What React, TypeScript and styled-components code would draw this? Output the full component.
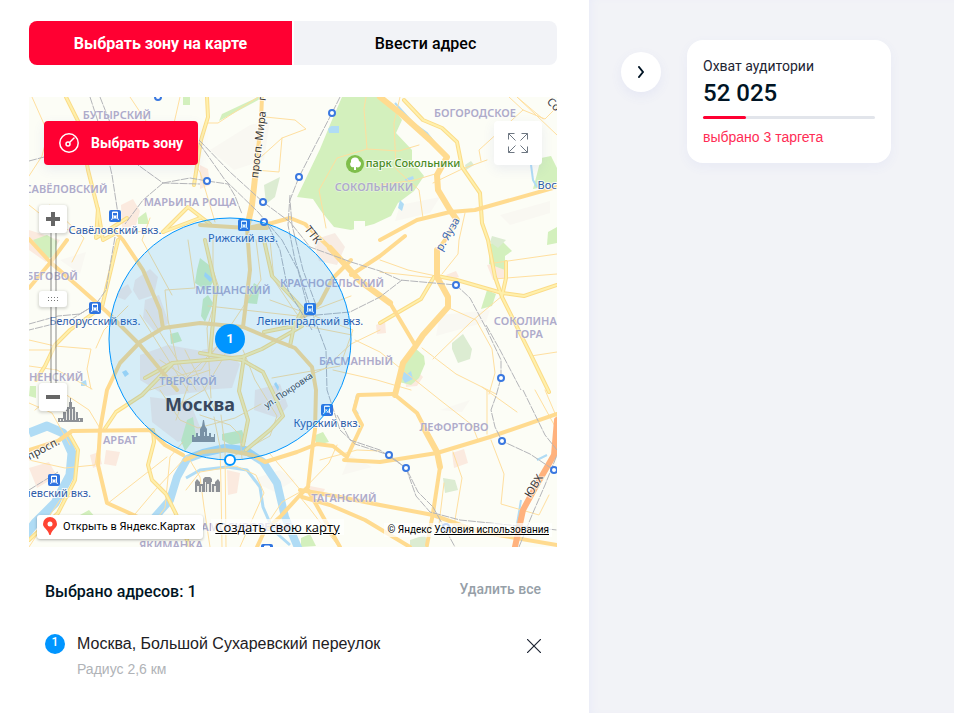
import React, { useState } from 'react';
import styled, { createGlobalStyle } from 'styled-components';

const GlobalStyle = createGlobalStyle`
  *, *::before, *::after { box-sizing: border-box; }
  body {
    margin: 0;
    background: #fff;
    color: #001424;
    font-family: Roboto, "Liberation Sans", sans-serif;
  }
  button, input { font: inherit; color: inherit; }
  button { border: 0; padding: 0; background: none; cursor: pointer; }
  h2, p, ul { margin: 0; padding: 0; }
  ul { list-style: none; }
`;

const Page = styled.div`
  display: flex;
  min-height: 100vh;
`;

const Main = styled.main`
  flex: 1;
  min-width: 0;
  padding: 21px 32px 32px 29px;
`;

const Sidebar = styled.aside`
  flex: 0 0 365px;
  display: flex;
  align-items: flex-start;
  gap: 26px;
  padding: 40px 32px;
  background: #f2f3f7;
  box-shadow: inset 6px 0 8px -4px #e9ebf8;
`;

const Tabs = styled.div`
  display: grid;
  grid-template-columns: 1fr 1fr;
  gap: 2px;
  margin-bottom: 32px;
  border-radius: 8px;
  overflow: hidden;
`;

const Tab = styled.button<{ $active?: boolean }>`
  height: 44px;
  padding-top: 2px;
  background: ${(p) => (p.$active ? '#ff0032' : '#f2f3f7')};
  color: ${(p) => (p.$active ? '#fff' : '#000')};
  font-size: 16px;
  font-weight: ${(p) => (p.$active ? 700 : 500)};
  line-height: 24px;
`;

const MapFrame = styled.section`
  position: relative;
  height: 450px;
  overflow: hidden;
  background: #fcfdf6;
`;

const MapCanvas = styled.svg`
  display: block;
  width: 100%;
  height: 100%;
`;

const PickZone = styled.button`
  position: absolute;
  top: 24px;
  left: 15px;
  display: flex;
  align-items: center;
  gap: 12px;
  height: 44px;
  padding: 0 15px;
  border-radius: 4px;
  background: #ff0032;
  box-shadow: 0 4px 12px rgba(90, 100, 200, 0.1);
  color: #fff;
  font-size: 14px;
  font-weight: 700;
`;

const Expand = styled.button`
  position: absolute;
  top: 24px;
  right: 15px;
  display: grid;
  place-items: center;
  width: 48px;
  height: 44px;
  border-radius: 4px;
  background: #fff;
  box-shadow: 0 4px 12px rgba(90, 100, 200, 0.1);
`;

const ZoomGroup = styled.div`
  position: absolute;
  top: 108px;
  left: 10px;
  display: flex;
  flex-direction: column;
  width: 28px;
`;

const ZoomButton = styled.button`
  display: grid;
  place-items: center;
  height: 28px;
  border-radius: 3px;
  background: #fff;
  box-shadow: 0 1px 3px 1px rgba(0, 0, 0, 0.15);
`;

const ZoomRange = styled.input`
  appearance: none;
  writing-mode: vertical-lr;
  direction: rtl;
  width: 28px;
  height: 150px;
  margin: 0;
  background: linear-gradient(90deg, transparent 11px, rgba(110, 110, 110, 0.4) 11px 13px, rgba(255, 255, 255, 0.4) 13px 16px, rgba(110, 110, 110, 0.4) 16px 18px, transparent 18px);
  cursor: pointer;

  &::-webkit-slider-thumb {
    appearance: none;
    width: 28px;
    height: 16px;
    border-radius: 3px;
    background:
      repeating-linear-gradient(90deg, #777 0 1px, transparent 1px 3px) 9px 6px / 10px 1px no-repeat,
      repeating-linear-gradient(90deg, #777 0 1px, transparent 1px 3px) 9px 9px / 10px 1px no-repeat,
      #fff;
    box-shadow: 0 1px 3px 1px rgba(0, 0, 0, 0.15);
  }
`;

const MapFooter = styled.div`
  position: absolute;
  right: 5px;
  bottom: 8px;
  left: 8px;
  display: flex;
  align-items: center;
  gap: 8px;
`;

const OpenMaps = styled.a`
  display: flex;
  align-items: center;
  gap: 6px;
  height: 24px;
  padding: 0 8px 2px 6px;
  border-radius: 3px;
  background: #fff;
  box-shadow: 0 1px 3px rgba(0, 0, 0, 0.3);
  color: #000;
  font-size: 11px;
  text-decoration: none;
  white-space: nowrap;
`;

const CreateMap = styled.a`
  padding: 0 4px;
  background: rgba(255, 255, 255, 0.7);
  color: #000;
  font-family: "Open Sans", sans-serif;
  font-size: 13px;
  line-height: 16px;
  white-space: nowrap;
`;

const Copyright = styled.p`
  margin: 6px 0 0 auto;
  padding: 0 3px;
  background: rgba(255, 255, 255, 0.7);
  color: #000;
  font-size: 10px;
  line-height: 14px;
  white-space: nowrap;

  a { color: inherit; }
`;

const Addresses = styled.section`
  padding: 32px 16px 0;
`;

const AddressHeader = styled.header`
  display: flex;
  justify-content: space-between;
  align-items: flex-start;
  margin-bottom: 28px;
`;

const AddressTitle = styled.h2`
  padding-top: 1px;
  font-size: 16px;
  font-weight: 500;
  line-height: 24px;
`;

const ClearAll = styled.button`
  color: #969fa8;
  font-size: 14px;
  font-weight: 500;
  line-height: 20px;
`;

const AddressRow = styled.li`
  display: flex;
  align-items: flex-start;
  gap: 12px;
`;

const AddressIndex = styled.span`
  width: 20px;
  height: 20px;
  margin-top: 2px;
  border-radius: 50%;
  background: #0095ff;
  color: #fff;
  font-size: 12px;
  font-weight: 500;
  line-height: 16px;
  text-align: center;
`;

const AddressText = styled.div`
  flex: 1;
`;

const AddressName = styled.p`
  color: #1d2023;
  font-family: "Liberation Sans", sans-serif;
  font-size: 16px;
  line-height: 24px;
`;

const AddressRadius = styled.p`
  margin-top: 3px;
  color: #b0b3b7;
  font-family: "Liberation Sans", sans-serif;
  font-size: 14px;
  line-height: 20px;
`;

const Remove = styled.button`
  display: grid;
  place-items: center;
  width: 14px;
  height: 28px;
`;

const Collapse = styled.button`
  display: grid;
  place-items: center;
  width: 40px;
  height: 40px;
  margin-top: 12px;
  border-radius: 50%;
  background: #fff;
  box-shadow: 0 4px 12px rgba(90, 100, 220, 0.08);
`;

const ReachCard = styled.section`
  width: 204px;
  padding: 16px;
  border-radius: 16px;
  background: #fff;
  box-shadow: 0 4px 12px rgba(90, 100, 220, 0.06);
`;

const ReachTitle = styled.h2`
  color: #1d2433;
  font-size: 14px;
  font-weight: 400;
  line-height: 20px;
`;

const ReachValue = styled.p`
  padding-top: 1px;
  color: #001424;
  font-size: 24px;
  font-weight: 500;
  line-height: 32px;
`;

const ReachTrack = styled.div`
  height: 3px;
  margin: 7px 0 8px;
  border-radius: 2px;
  background: #e2e5eb;
`;

const ReachFill = styled.div`
  height: 3px;
  border-radius: 2px;
  background: #ff0032;
`;

const ReachNote = styled.p`
  color: #ff2d55;
  font-family: "Liberation Sans", sans-serif;
  font-size: 14px;
  line-height: 20px;
`;

const Road = styled.path<{ $w: number; $tone?: string }>`
  fill: none;
  stroke: ${(p) => p.$tone ?? '#ffdc8c'};
  stroke-width: ${(p) => p.$w}px;
  stroke-linejoin: round;
  stroke-linecap: round;
`;

const Rail = styled.path`
  fill: none;
  stroke: #b4b5b9;
  stroke-width: 1px;
  stroke-dasharray: 8 1;
`;

const District = styled.text`
  fill: #aeabca;
  font-family: "Noto Sans", sans-serif;
  font-size: 11px;
  font-weight: 600;
  text-anchor: middle;
  paint-order: stroke;
  stroke: rgba(255, 255, 255, 0.5);
  stroke-width: 1px;
`;

const Station = styled.text`
  fill: #2f5ca8;
  font-family: "Noto Sans", sans-serif;
  font-size: 11px;
  text-anchor: middle;
  paint-order: stroke;
  stroke: rgba(255, 255, 255, 0.8);
  stroke-width: 2px;
`;

const Street = styled.text<{ $color?: string; $size?: number }>`
  fill: ${(p) => p.$color ?? '#3c3c3c'};
  font-family: "Noto Sans", sans-serif;
  font-size: ${(p) => p.$size ?? 11}px;
  text-anchor: middle;
  paint-order: stroke;
  stroke: rgba(255, 255, 255, 0.7);
  stroke-width: 2px;
`;

const City = styled.text`
  fill: #38475d;
  font-family: "Noto Sans", sans-serif;
  font-size: 18px;
  font-weight: 700;
  text-anchor: middle;
`;

const MarkerText = styled.text`
  fill: #fff;
  font-size: 13px;
  font-weight: 700;
  text-anchor: middle;
`;

const builtUp = [
  'M29 230L60 240L46 262L29 250Z', 'M121 205l12-6 7 12-4 14-14 4Z', 'M405 375l10-6 8 8-6 9-11 1Z', 'M452 453l12-4 4 14-14 5Z',
  'M487 265l16-3 3 16-13 2Z', 'M446 275l10-4 3 6-8 3Z', 'M29 468l20-6 8 14-20 12Z', 'M90 455l9-3 3 12-9 4Z',
  'M227 470l13 3-3 20-9 2Z', 'M310 486l15 3-5 10-11-3Z', 'M376 325l9-4 1 12-9 1Z', 'M200 165l8 4 2 16-10 4Z', 'M106 450l14 2-4 14-12-2Z',
];

const centre = [
  'M135 280l15-11 8 8-4 18-15 5-6-10Z', 'M145 300l14-5 10 28-14 9-12-14Z', 'M140 355l28-10 34 6 16 20-12 20-40 5-26-16Z', 'M202 350l20-4 18 18-8 24-30 2Z',
  'M119 290l9-6 4 8-7 8-8-3Z', 'M313 240l22-7 10 14-8 18-18-4Z', 'M255 390l25-6 8 22-10 12-24-8Z', 'M150 397l40 5 12 30-24 10-26-20Z',
];

const greens = [
  'M342 97L378 97L393 108L402 120L396 133L412 150L412 161L424 176L414 191L398 203L391 216L374 224L351 230L334 227L321 211L313 199L297 197L308 174L320 149L332 120Z',
  'M219 121l3-7 36-17h6Z', 'M541 158l10-2 6 12v16l-24 5 4-15Z', 'M490 244l10-5 12 12-7 5v14l-16-6Z',
  'M403 362l12-14 9 8 1 8-6 14-8 7-12-3Z', 'M487 290l9 4-4 12-11 3Z',
  'M200 258l9 7 6 14-8 12-12-8 2-13Z', 'M254 283l6 4-3 17-11-1Z', 'M203 299l5-4 5 8-8 19-4-6Z', 'M170 334l8-2 4 9-11 3Z',
  'M187 420l6-3 3 20-11 14-4-10Z', 'M222 434l20-4 4 12-15 3-9-5Z', 'M313 436l10-4 6 10-12 3Z',
  'M33 240l14-5 10 6-2 15-9 3Z', 'M80 515l9-5 7 8-11 2Z',
  'M301 538l9-4 6 12-15 1Z', 'M138 218l8-6 3 12h-11Z', 'M30 386l6 0 0 12-7-2Z', 'M548 232l9-5v16l-10 2Z', 'M183 97h7v8h-7Z',
];

const thinRoads = [
  'M32 97L48 133L42 156L29 176', 'M208 123h10L258 97', 'M265 117l30 3 11 9-24 9-21 19M282 138l-3 34-24-2', 'M366 97l-2 12 3 40-30 9-18 32 7 38',
  'M367 149l32 2 20-6', 'M400 97l-6 26 2 46 23 21 4 28', 'M509 97l14 13 22 9 12-12M517 97l26 22M523 110L479 150l2 11', 'M433 183l29-14 25-9',
  'M465 213l-6 27-1 14-16 20', 'M380 185l35-5 20-6', 'M380 260l28 10 28 6M380 272l54 6', 'M494 263l63-9M494 279l63-5',
  'M449 308l27 12 16 29 3 24-6 21', 'M502 296l-30 25-39 38M422 348l34 26 40 20',
  'M531 356l26-4', 'M29 340l26 6 36 3-4 20 4 20M29 350l25 0', 'M96 348l8-18 24-24', 'M188 240l5 34 2 14-30 2 3 30 11 50', 'M213 240v30l6 18-12 40 4 70',
  'M256 240l5 40-40 60-20 30-40 10',
  'M270 240l4 40 20 30 12 16 46 9M270 300l83 30-13 36-68 12', 'M208 306l90 10 53-20', 'M380 330L351 344l-27 25-12 5', 'M355 340l25 12 60 48 32 25 6 15',
  'M487 390v44M482 387l35 25', 'M333 370l44 10 34 10', 'M453 452l9 26-9 54-14-8 5-41', 'M491 440l13 34-3 30 38 11 10-20', 'M29 460l36 8 30-3 4-25',
  'M107 504l60-47M119 533l38-45 30-32M152 525l13-17 5-51 13-15',
  'M232 340l-10 20-18 30-24 14M243 350l12 30 22 36-7 20-40 22', 'M200 415l30 10 10 10 2 24M160 390l20 30 18 8 37-10 26-14', 'M140 315l48 76M146 310l50 80M181 383l40-40',
  'M270 454l17 20 15 18', 'M210 547l-6-40-4-30-12-20M222 547l-1-60-1-40-6-30M226 547l-1-100-4-32', 'M240 547l24-54-8-18-20-9-36 6-14 18', 'M300 497l10 12 29 38',
  'M300 492l-18 10-20 30', 'M320 460l37-10 23 1', 'M337 445l-8 18-26 27', 'M29 403l23 10 18 32', 'M35 410l24-20 30 20 12 20', 'M29 547l31-47 14-5',
  'M180 97l-8 35 28 40 15 50', 'M130 97l30 45 8 16', 'M50 205l34 33-12 24', 'M29 205l30 24 60 4 30-2', 'M517 97l40 38', 'M545 390l12 28M535 390l22 40', 'M29 366l28 4 35 19',
  'M150 218l-8 22 30 55', 'M160 360l30 20-14 40M185 350l30 60M150 390l60-20',
];

const midRoads = [
  'M66 97L80 125L88 170L98 210L103 240L114 234', 'M207 97L208 117L201 140L194 185', 'M404 100L423 120L442 128L457 142L462 167L480 193L482 223L488 240L495 277L502 297L530 353L549 392',
  'M118 240L106 290L102 307L70 330L55 345L45 366L36 380', 'M264 240L272 276L303 309L294 326L264 332M294 326L290 346', 'M302 326L262 349L242 357L172 363L145 378',
  'M200 353L242 360L263 372L275 397L283 416L270 430L246 450', 'M380 323L421 299L434 277', 'M437 276L457 280L502 293L524 296L557 285', 'M506 262L506 278L502 296',
  'M173 363L142 395L116 412L104 430', 'M244 357L239 391L248 420L243 445', 'M205 240L216 288L210 355', 'M153 430L154 442L148 465L152 480L166 494L176 514L190 547',
  'M29 540L58 513L75 480L78 450L69 434', 'M163 232L188 207L210 224', 'M98 209L96 238L127 218', 'M163 232L200 218',
];

const wideRoads = [
  'M29 239L50 262L80 288L107 312L140 345L177 390', 'M67 240L50 263L29 288', 'M114 230L123 240L143 270L160 310L163 328',
  'M151 530L138 517L107 503L98 465L100 430L107 390L120 363L140 342L163 328L200 323L243 327L267 337L295 348L312 367L316 390L315 430L313 443L308 487L300 495L280 517L265 530L257 547',
  'M262 97L261 120L257 160L252 205L247 228L250 270L243 327', 'M247 228L272 223L290 218L305 224L330 248L360 281L390 303L415 345', 'M200 225L247 228L267 228', 'M29 450L58 441L72 431L150 430L165 445L183 455',
  'M185 460L203 452L225 450L252 455L265 462L297 452L317 444L333 446L347 457L362 425L354 410L358 395L393 394',
  'M380 97L400 113L430 140L447 157L437 175L438 190L450 210L457 220L445 240L438 250L437 277L448 297L448 307L423 335L415 347L403 363L395 395L417 413L437 452L440 467L433 513L427 545',
  'M380 240L417 220L450 212L475 210L557 187', 'M351 260L333 278L320 303L300 320', 'M344 460L380 462L437 453L490 437L557 414', 'M300 490L340 497L380 505L433 515L480 532L557 545',
  'M351 275L380 256L405 236', 'M308 490L340 547', 'M302 497L330 505L365 520L410 547',
];

const rails = [
  'M90 97L104 140L112 175L118 214', 'M29 161L48 156L100 130', 'M100 97L115 135L138 165L163 183L200 184', 'M163 183L143 200L125 224', 'M163 183L190 178L207 181L228 184L235 196L242 214',
  'M199 140L230 172L263 202L290 222L310 247L351 262L380 271L400 280L456 285L470 298L486 328L501 360L501 378L496 396L491 410L495 427L502 441L530 454L554 470',
  'M199 143L225 180L258 212L282 240L298 270L308 309', 'M340 97L332 113L318 140L299 177L290 200L292 225L303 270L316 305',
  'M290 195L288 225L295 260L313 315L326 350L327 390L340 430L355 444L389 455L406 468L418 492L433 507L455 547',
  'M268 225L280 250L288 290L312 330', 'M306 316L350 312L380 297L402 280', 'M486 325L500 350L521 390', 'M115 237L111 260L106 290L96 304L80 314L58 316L29 324', 'M100 302L70 320L29 330',
  'M29 490L58 472', 'M406 468L416 496L430 512L460 520L500 524L557 530', 'M523 390L545 435L557 450', 'M519 547L532 515L545 485L557 455', 'M337 415L350 440L380 450L406 468',
];

const districts: [string, number, number][] = [
  ['БУТЫРСКИЙ', 117, 119], ['БОГОРОДСКОЕ', 475, 117], ['САВЁЛОВСКИЙ', 66, 193], ['МАРЬИНА РОЩА', 190, 206], ['СОКОЛЬНИКИ', 374, 191],
  ['БЕГОВОЙ', 52, 280], ['МЕЩАНСКИЙ', 233, 294], ['КРАСНОСЕЛЬСКИЙ', 332, 287], ['СОКОЛИНАЯ', 529, 325], ['ГОРА', 529, 338], ['БАСМАННЫЙ', 356, 365],
  ['ТВЕРСКОЙ', 188, 385], ['ПРЕСНЕНСКИЙ', 42, 381], ['АРБАТ', 120, 444], ['ЛЕФОРТОВО', 454, 431], ['ТАГАНСКИЙ', 344, 502], ['ЯКИМАНКА', 171, 549], ['ЗАМОСКВОРЕЧЬЕ', 243, 531],
];

const stations: [string, number, number, number, number][] = [
  ['Савёловский вкз.', 115, 234, 115, 216], ['Рижский вкз.', 243, 242, 244, 225], ['Белорусский вкз.', 95, 325, 95, 308],
  ['Ленинградский вкз.', 310, 325, 310, 309], ['Курский вкз.', 327, 427, 327, 410], ['Киевский вкз.', 54, 497, 54, 480], ['Павелецкий вкз.', 267, 566, 267, 550],
];

const stops = [[158, 97], [207, 181], [332, 113], [299, 177], [263, 202], [264, 222], [456, 285], [501, 378], [502, 441], [389, 455], [406, 468], [554, 470], [446, 527]];

function TrainIcon({ x, y }: { x: number; y: number }) {
  return (
    <g transform={`translate(${x - 6} ${y - 6})`}>
      <rect width="12" height="12" rx="2" fill="#2f74e0" />
      <path d="M3.500 2h5v6h-5zM3.500 8l-1 2M8.500 8l1 2" fill="#fff" stroke="#fff" strokeWidth="1" />
      <path d="M4 3h4v2.500H4zM4 6.500h1v1H4zM7 6.500h1v1H7z" fill="#2f74e0" />
    </g>
  );
}

function CityMap() {
  return (
    <MapCanvas viewBox="29 97 528 450" preserveAspectRatio="xMidYMid slice" role="img" aria-label="Карта Москвы">
      <rect x="-600" y="-200" width="1800" height="1000" fill="#fcfdf6" />
      <path
        d="M210 150l40-25 20-5-6 40-30 10ZM440 315l50-5-4 12-50 14ZM400 205l40-8-10 16-35 8ZM250 480l30-10 15 10-20 12ZM60 260l26-8-6 22ZM500 215l50-14v12l-40 12ZM350 455l22 12-30 8ZM440 410l30-10-8 12Z"
        fill="#f9f8f2"
      />
      <g fill="#fbeadf">{builtUp.map((d) => <path key={d} d={d} />)}</g>
      <g fill="#f7ece4">{centre.map((d) => <path key={d} d={d} />)}</g>
      <g fill="#d3f0bd">{greens.map((d) => <path key={d} d={d} />)}</g>
      <path d="M452 343l11-9 9 15-2 10-12 4-6-14ZM264 185l16-8-5 20-9 7ZM443 478l12 2 3 10-13 3ZM465 165l6-4 3 4-8 5ZM410 540l15-5 4 12h-19ZM492 236l14 4-8 8-8-6Z" fill="#dcecd2" />
      <path d="M354 221h11v9h-11Z" fill="#fcfdf6" />
      <g fill="none" stroke="#b0dcf5" strokeLinejoin="round">
        <path d="M29 433L47 426L63 433L72 453L70 475L55 503L35 523L25 536" strokeWidth="9" />
        <path d="M137 536L155 517L170 500L177 477L187 459L203 453L225 448L245 450L263 462L277 483L285 517L299 550" strokeWidth="8" />
        <path d="M186 478L200 470L227 467L247 470L260 487L263 507L273 530L290 545" strokeWidth="3" />
        <path d="M395 103L413 123L427 133L443 153M357 395L354 408L358 414M530 157L533 180L537 187M521 500L516 530M537 460L547 455" strokeWidth="2" />
      </g>
      <path
        d="M328 129l3-3h8v7h-10ZM400 200l4 4-2 7-4-3ZM405 179l8-3 1 3-8 3ZM122 372l4-2 3 4-4 3ZM205 272l8 7-3 3-6-6ZM403 371l4 3 4-3 2 8-8 4-3-5ZM81 382l5-2 1 6h-6ZM276 382l3 5-1 4-4-7Z"
        fill="#b0dcf5"
      />
      {thinRoads.map((d) => <Road key={d} d={d} $w={1} $tone="#ffdf9f" />)}
      {midRoads.map((d) => <Road key={d} d={d} $w={4} $tone="#fbdc88" />)}
      {midRoads.map((d) => <Road key={d} d={d} $w={2} $tone="#fff0ac" />)}
      {wideRoads.map((d) => <Road key={d} d={d} $w={4} $tone="#ffdb90" />)}
      <Road d="M257 160L252 205L247 228M330 248L360 281L390 303M380 97L400 113L430 140L447 157L437 175L438 190L450 210L457 220M437 250L437 277L448 297L448 307L423 335L415 347L403 363L395 395M425 430L437 452L440 467" $w={6} $tone="#ffdb90" />
      <Road d="M557 420L554 455L536 486L523 510L515 547" $w={6} $tone="#ffb27d" />
      {rails.map((d) => <Rail key={d} d={d} />)}

      <g fill="#8d9196">
        <path d="M58 422v-4h5v-6h3v-5h3v-5h1v-4h1v4h1v5h3v5h3v6h5v4Z" />
        <path d="M192 442v-7h2v2h2v-4h2v3h2v-7l2-3 1-6 1 0 1 6 2 3v7h2v-3h2v4h3v-3h1v8Z" />
        <path d="M195 492v-10l2-3 3 3v2h3v-5l2-2h5l2 2v5h3v-2l3-3 2 3v10Z" />
      </g>
      <path d="M60 419h1v2h-1zM63 419h1v2h-1zM66 411h1v9h-1zM69 409h1v11h-1zM72 409h1v11h-1zM75 411h1v9h-1zM79 419h1v2h-1zM204 432h1v4h-1zM197 486h2v6h-2zM201 486h1v6h-1zM205 482h1v10h-1zM207 484h2v8h-2zM211 482h1v10h-1zM214 486h2v6h-2z" fill="#ecece6" />

      {districts.map(([name, x, y]) => <District key={name} x={x} y={y}>{name}</District>)}
      <Street transform="translate(262 145) rotate(-83)" $size={11}>просп. Мира</Street>
      <Street transform="translate(266 98) rotate(-83)" $size={11}>п</Street>
      <Street transform="translate(310 237) rotate(52)" $size={11}>ТТК</Street>
      <Street transform="translate(451 236) rotate(-60)" $color="#3a66ae" $size={11}>р. Яуза</Street>
      <Street transform="translate(290 393) rotate(-34)" $size={9}>ул. Покровка</Street>
      <Street transform="translate(45 452) rotate(-28)">просп.</Street>
      <Street transform="translate(537 488) rotate(-58)">ЮВХ</Street>
      <Street transform="translate(551 107) rotate(45)" $size={11}>Со</Street>
      <Street x="413" y="167" $color="#4a8a24" fontWeight="500">парк Сокольники</Street>
      <Station x="567" y="189">Восточный</Station>
      <circle cx="355" cy="164" r="9" fill="#7fbe4b" />
      <path d="M354 170v-3a3 3 0 0 1-3-5a4 4 0 0 1 8-1a3 3 0 0 1-3 6v3Z" fill="#fff" />
      {stations.map(([name, x, y, ix, iy]) => (
        <g key={name}>
          <Station x={x} y={y}>{name}</Station>
          <TrainIcon x={ix} y={iy} />
        </g>
      ))}
      <g fill="#fff" stroke="#3a78e0" strokeWidth="2">
        {stops.map(([x, y]) => <circle key={`${x}-${y}`} cx={x} cy={y} r="3" />)}
      </g>

      <circle cx="230" cy="339" r="121" fill="#0095ff" fillOpacity="0.15" stroke="#0095ff" strokeWidth="1" />
      <City x="200" y="411">Москва</City>
      <circle cx="230" cy="339" r="15" fill="#0095ff" />
      <MarkerText x="230" y="343">1</MarkerText>
      <circle cx="230" cy="460" r="5" fill="#fff" stroke="#0095ff" strokeWidth="2" />
    </MapCanvas>
  );
}

export default function App() {
  const [zoom, setZoom] = useState(57);
  const share = 25;

  return (
    <>
      <GlobalStyle />
      <Page>
        <Main>
          <Tabs role="tablist">
            <Tab role="tab" aria-selected="true" $active>Выбрать зону на карте</Tab>
            <Tab role="tab" aria-selected="false">Ввести адрес</Tab>
          </Tabs>

          <MapFrame>
            <CityMap />
            <PickZone>
              <svg width="20" height="20" viewBox="0 0 20 20" fill="none" stroke="#fff" strokeWidth="1.5" aria-hidden="true">
                <circle cx="10" cy="10" r="9.200" />
                <circle cx="9" cy="11" r="2" />
                <path d="M10.500 9.500L15 5" strokeLinecap="round" />
              </svg>
              Выбрать зону
            </PickZone>
            <Expand aria-label="Развернуть карту">
              <svg width="22" height="22" viewBox="0 0 22 22" fill="none" stroke="#6e7782" aria-hidden="true">
                <path d="M1.500 7.500v-6h6M1.500 1.500l7 7M14.500 1.500h6v6M20.500 1.500l-7 7M1.500 14.500v6h6M1.500 20.500l7-7M14.500 20.500h6v-6M20.500 20.500l-7-7" />
              </svg>
            </Expand>
            <ZoomGroup>
              <ZoomButton aria-label="Приблизить" onClick={() => setZoom(Math.min(100, zoom + 10))}>
                <svg width="14" height="14" aria-hidden="true"><path d="M5 0h4v5h5v4H9v5H5V9H0V5h5z" fill="#666" /></svg>
              </ZoomButton>
              <ZoomRange type="range" min="0" max="100" value={zoom} aria-label="Масштаб" onChange={(e) => setZoom(Number(e.target.value))} />
              <ZoomButton aria-label="Отдалить" onClick={() => setZoom(Math.max(0, zoom - 10))}>
                <svg width="14" height="14" aria-hidden="true"><path d="M0 5h14v4H0z" fill="#666" /></svg>
              </ZoomButton>
            </ZoomGroup>
            <MapFooter>
              <OpenMaps href="#maps">
                <svg width="14" height="18" viewBox="0 0 14 18" aria-hidden="true">
                  <path d="M7 0a7 7 0 0 0-7 7c0 4 5 5.500 6.200 10.400c.2.800 1.400.800 1.600 0C9 12.500 14 11 14 7a7 7 0 0 0-7-7z" fill="#f43" />
                  <circle cx="7" cy="7" r="2.500" fill="#fff" />
                </svg>
                Открыть в Яндекс.Картах
              </OpenMaps>
              <CreateMap href="#create">Создать свою карту</CreateMap>
              <Copyright>© Яндекс <a href="#terms">Условия использования</a></Copyright>
            </MapFooter>
          </MapFrame>

          <Addresses>
            <AddressHeader>
              <AddressTitle>Выбрано адресов: 1</AddressTitle>
              <ClearAll>Удалить все</ClearAll>
            </AddressHeader>
            <ul>
              <AddressRow>
                <AddressIndex>1</AddressIndex>
                <AddressText>
                  <AddressName>Москва, Большой Сухаревский переулок</AddressName>
                  <AddressRadius>Радиус 2,6 км</AddressRadius>
                </AddressText>
                <Remove aria-label="Удалить адрес">
                  <svg width="14" height="14" viewBox="0 0 14 14" fill="none" stroke="#1d2433" strokeWidth="1.2" aria-hidden="true">
                    <path d="M0 0L14 14M14 0L0 14" />
                  </svg>
                </Remove>
              </AddressRow>
            </ul>
          </Addresses>
        </Main>

        <Sidebar>
          <Collapse aria-label="Свернуть панель">
            <svg width="6" height="12" viewBox="0 0 6 12" fill="none" stroke="#001424" strokeWidth="2" aria-hidden="true">
              <path d="M1 1L5 6L1 11" strokeLinecap="round" />
            </svg>
          </Collapse>
          <ReachCard>
            <ReachTitle>Охват аудитории</ReachTitle>
            <ReachValue>52 025</ReachValue>
            <ReachTrack role="progressbar" aria-label="Охват аудитории" aria-valuenow={share} aria-valuemin={0} aria-valuemax={100}>
              <ReachFill style={{ width: `${share}%` }} />
            </ReachTrack>
            <ReachNote>выбрано 3 таргета</ReachNote>
          </ReachCard>
        </Sidebar>
      </Page>
    </>
  );
}
